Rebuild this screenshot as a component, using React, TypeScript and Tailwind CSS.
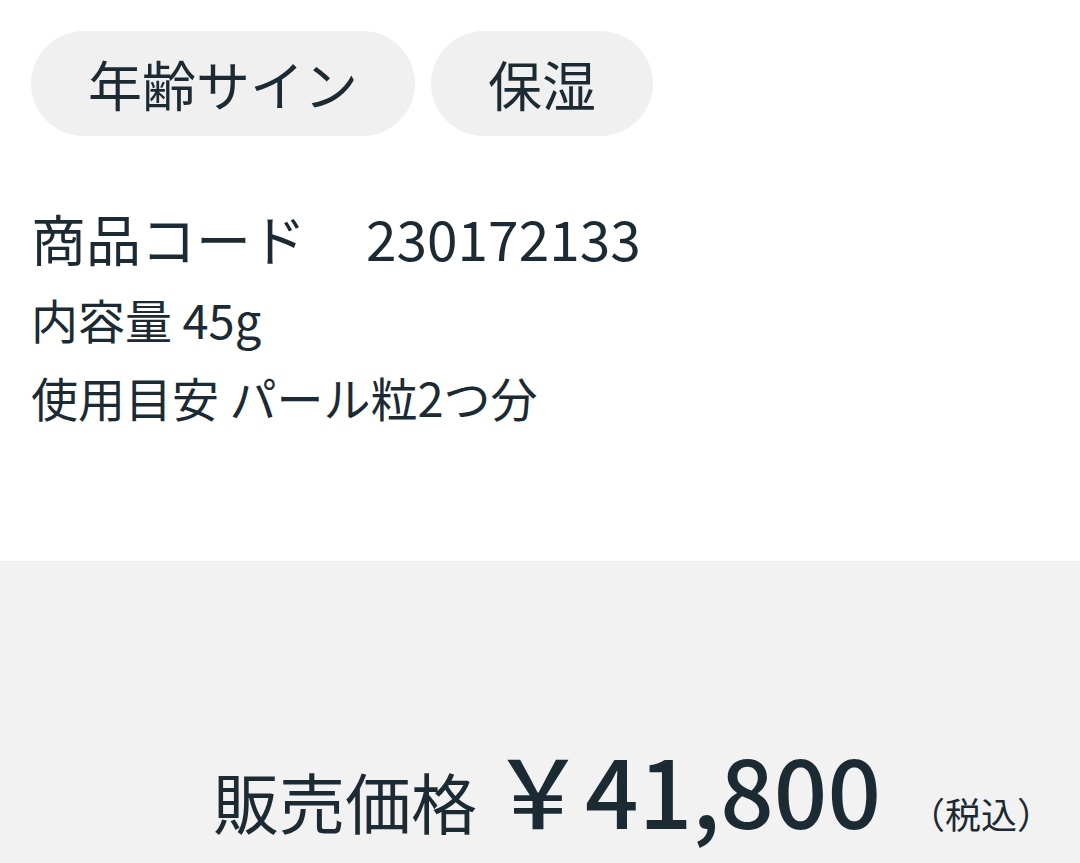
const font = { fontFamily: '"Noto Sans CJK JP", "Noto Sans", sans-serif' };

const tags = ['年齢サイン', '保湿'];

function App() {
  return (
    <div className="min-h-[863px] bg-white text-[#1b2a33]" style={font}>
      <div className="h-[561px] px-[31px] pt-[31px]">
        <div className="flex gap-4">
          {tags.map((tag) => (
            <div key={tag} className="flex h-[105px] items-center rounded-full bg-[#f0f0f0] px-[57px] text-[54px]">
              {tag}
            </div>
          ))}
        </div>

        <div className="mt-[66px] flex items-baseline gap-[60px] text-[55px] leading-[70px]">
          <span>商品コード</span>
          <span>230172133</span>
        </div>
        <div className="mt-3 text-[47px] leading-[70px]">内容量 45g</div>
        <div className="mt-2 text-[47px] leading-[70px]">使用目安 パール粒2つ分</div>
      </div>

      <div className="flex h-[302px] items-end justify-end border-t border-[#ececec] bg-[#f2f2f2] pr-[27px] pb-[4px]">
        <div className="flex items-baseline">
          <span className="text-[66px]">販売価格</span>
          <span className="ml-[14px] text-[94px] font-medium">￥41,800</span>
          <span className="ml-[28px] text-[36px]">（税込）</span>
        </div>
      </div>
    </div>
  );
}

export default App;
